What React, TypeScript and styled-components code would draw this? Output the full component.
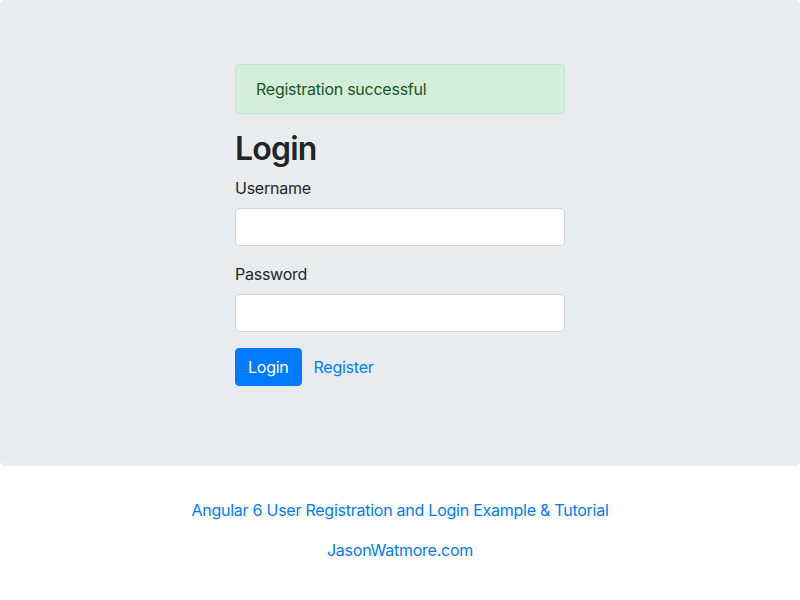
import styled, { createGlobalStyle } from "styled-components";

const GlobalStyle = createGlobalStyle`
    * {
        box-sizing: border-box;
    }
    body {
        margin: 0;
        font-family: Inter, "Noto Sans", "Liberation Sans", sans-serif;
        font-size: 16px;
        line-height: 1.5;
        letter-spacing: -0.25px;
        color: #212529;
        background-color: #fff;
    }
`;

const Jumbotron = styled.div`
    background-color: #e9ecef;
    padding: 64px 32px;
    border-radius: 0.3rem;
    margin-bottom: 32px;
`;

const Container = styled.div`
    width: 720px;
    margin: 0 auto;
`;

// col-sm-6 offset-sm-3
const Column = styled.div`
    width: 360px;
    margin-left: 180px;
    padding: 0 15px;
`;

const Alert = styled.div`
    padding: 12px 20px;
    margin-bottom: 16px;
    border: 1px solid #c3e6cb;
    border-radius: 0.25rem;
    background-color: #d4edda;
    color: #155724;
`;

const Title = styled.h2`
    margin: 0 0 8px;
    font-size: 32px;
    font-weight: 600;
    line-height: 1.2;
    letter-spacing: -0.8px;
`;

const Group = styled.div`
    margin-bottom: 16px;
`;

const Label = styled.label`
    display: inline-block;
    margin-bottom: 8px;
`;

const Input = styled.input`
    display: block;
    width: 100%;
    height: 38px;
    padding: 6px 12px;
    font: inherit;
    color: #495057;
    background-color: #fff;
    border: 1px solid #ced4da;
    border-radius: 0.25rem;
    outline: none;
`;

const Button = styled.button`
    display: inline-block;
    height: 38px;
    padding: 6px 12px;
    font: inherit;
    letter-spacing: inherit;
    color: #fff;
    background-color: #007bff;
    border: 1px solid #007bff;
    border-radius: 0.25rem;
    cursor: pointer;
`;

const LinkButton = styled.a`
    display: inline-block;
    padding: 7px 12px;
    color: #007bff;
    text-decoration: none;
`;

const Footer = styled.div`
    text-align: center;
`;

const FooterLine = styled.p`
    margin: 0 0 16px;
`;

const FooterLink = styled.a`
    color: #007bff;
    text-decoration: none;
`;

export default function App() {
    return (
        <>
            <GlobalStyle />
            <Jumbotron>
                <Container>
                    <Column>
                        <Alert>Registration successful</Alert>
                        <Title>Login</Title>
                        <form onSubmit={(e) => e.preventDefault()}>
                            <Group>
                                <Label htmlFor="username">Username</Label>
                                <Input id="username" type="text" />
                            </Group>
                            <Group>
                                <Label htmlFor="password">Password</Label>
                                <Input id="password" type="password" />
                            </Group>
                            <Group>
                                <Button type="submit">Login</Button>
                                <LinkButton href="#">Register</LinkButton>
                            </Group>
                        </form>
                    </Column>
                </Container>
            </Jumbotron>
            <Footer>
                <FooterLine>
                    <FooterLink href="#">Angular 6 User Registration and Login Example &amp; Tutorial</FooterLink>
                </FooterLine>
                <FooterLine>
                    <FooterLink href="#">JasonWatmore.com</FooterLink>
                </FooterLine>
            </Footer>
        </>
    );
}
